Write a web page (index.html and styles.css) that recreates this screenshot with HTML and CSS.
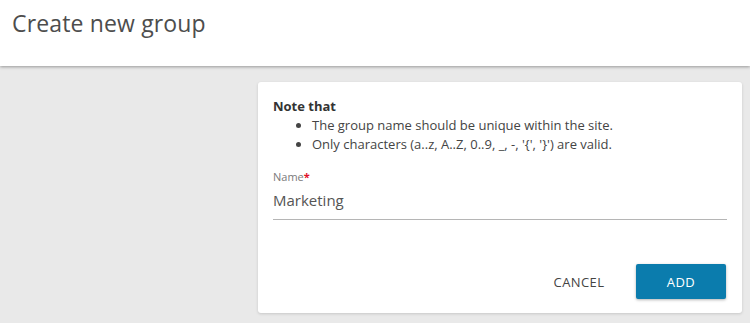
FILE: index.html
```html
<!DOCTYPE html>
<html lang="en">
<head>
    <meta charset="UTF-8">
    <meta name="viewport" content="width=device-width, initial-scale=1.0">
    <title>Create new group</title>
    <link rel="stylesheet" href="styles.css">
</head>
<body>
    <header class="page-header">
        <h1 class="page-title">Create new group</h1>
    </header>

    <main class="page-body">
        <div class="side-space"></div>

        <!-- Formulario de grupo -->
        <section class="group-card">
            <div class="note">
                <p class="note-title">Note that</p>
                <ul class="note-list">
                    <li>The group name should be unique within the site.</li>
                    <li>Only characters (a..z, A..Z, 0..9, _, -, '{', '}') are valid.</li>
                </ul>
            </div>

            <div class="field">
                <label for="groupName" class="field-label">Name<span class="required">*</span></label>
                <input type="text" class="field-input" id="groupName" name="groupName" value="Marketing">
            </div>

            <div class="card-footer">
                <button type="button" class="btn btn-cancel">Cancel</button>
                <button type="button" class="btn btn-add">Add</button>
            </div>
        </section>
    </main>
</body>
</html>
```

FILE: styles.css
```css
* {
    box-sizing: border-box;
}

body {
    margin: 0;
    height: 323px;
    background-color: #e9e9e9;
    font-family: "Open Sans", Lato, sans-serif;
    color: #333;
    overflow: hidden;
}

.page-header {
    background-color: #fff;
    height: 66px;
    padding: 8px 12px;
    box-shadow: 0 1px 3px rgba(0, 0, 0, 0.35);
    position: relative;
    z-index: 1;
}

.page-title {
    margin: 0;
    font-size: 23px;
    font-weight: 400;
    color: #4d4d4d;
    line-height: 30px;
    letter-spacing: 0.15px;
}

.page-body {
    display: grid;
    grid-template-columns: 1fr 484px;
    padding: 16px 8px 0 0;
}

.group-card {
    background-color: #fff;
    border-radius: 3px;
    box-shadow: 0 1px 3px rgba(0, 0, 0, 0.15);
    padding: 15px 15px 14px 15px;
    height: 231px;
    display: flex;
    flex-direction: column;
}

.note-title {
    margin: 0;
    font-size: 13px;
    font-weight: 700;
    color: #333;
    line-height: 18px;
}

.note-list {
    margin: 1px 0 0 0;
    padding-left: 39px;
    font-size: 13px;
    color: #444;
    line-height: 19px;
}

.field {
    margin-top: 16px;
    display: flex;
    flex-direction: column;
}

.field-label {
    font-size: 11px;
    color: #7a7a7a;
    line-height: 14px;
}

.required {
    color: #e0102a;
    font-weight: 700;
}

.field-input {
    border: none;
    border-bottom: 1px solid #b5b5b5;
    font-family: inherit;
    font-size: 15px;
    color: #555;
    padding: 6px 0 9px 0;
    outline: none;
}

.card-footer {
    margin-top: auto;
    display: flex;
    justify-content: flex-end;
    align-items: center;
    gap: 12px;
    padding-right: 1px;
}

.btn {
    font-family: inherit;
    font-size: 13px;
    text-transform: uppercase;
    border: none;
    border-radius: 2px;
    height: 35px;
    cursor: pointer;
    letter-spacing: 0.4px;
}

.btn-cancel {
    background: none;
    color: #444;
    width: 90px;
}

.btn-add {
    background-color: #0b7cad;
    color: #fff;
    width: 90px;
    box-shadow: 0 1px 3px rgba(0, 0, 0, 0.3);
}
```
